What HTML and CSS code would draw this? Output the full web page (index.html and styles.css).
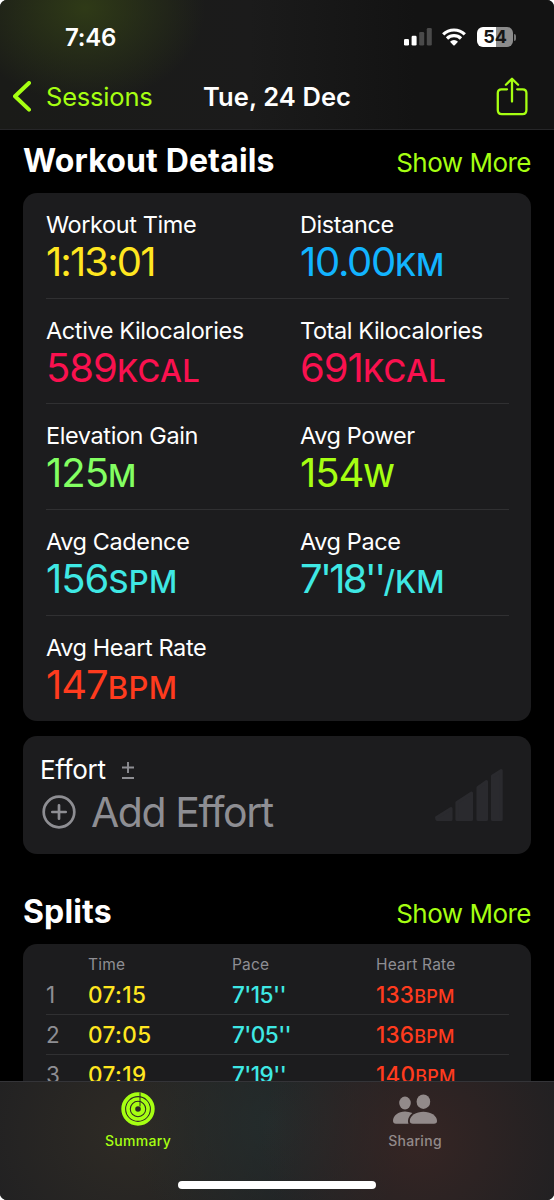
FILE: index.html
```html
<!DOCTYPE html>
<html lang="en">
<head>
<meta charset="utf-8">
<title>Workout Summary</title>
<link rel="stylesheet" href="styles.css">
</head>
<body>
<div class="screen">
  <header class="top">
    <div class="status">
      <span class="clock">7:46</span>
      <div class="indicators">
        <svg class="cell" width="28" height="18" viewBox="0 0 28 18"><rect x="0" y="11" width="5" height="6.5" rx="1.3" fill="#fff"/><rect x="7.6" y="7.8" width="5" height="9.7" rx="1.3" fill="#fff"/><rect x="15.2" y="4" width="5" height="13.5" rx="1.3" fill="#4a4a4a"/><rect x="22.8" y="0" width="5" height="17.5" rx="1.3" fill="#4a4a4a"/></svg>
        <svg class="wifi" width="24" height="18" viewBox="0 0 24 18"><g fill="none" stroke="#fff" stroke-width="3.2"><path d="M1.2 6.4a15.4 15.4 0 0 1 21.600 0"/><path d="M5 10.500a10 10 0 0 1 14 0"/></g><path d="M8 13.700a5.700 5.700 0 0 1 8 0l-3.300 3.500q-.7.7-1.400 0z" fill="#fff"/></svg>
        <div class="battery"><span>54</span></div>
        <i class="nub"></i>
      </div>
    </div>
    <nav class="nav">
      <div class="back"><svg width="18" height="31" viewBox="0 0 18 31"><path d="M16 2L2 15.3L16 28.6" fill="none" stroke="#a6ff12" stroke-width="4" stroke-linecap="round" stroke-linejoin="round"/></svg><span>Sessions</span></div>
      <h1>Tue, 24 Dec</h1>
      <svg class="share" width="32" height="40" viewBox="0 0 32 40"><g fill="none" stroke="#a6ff12" stroke-width="2.3" stroke-linecap="round" stroke-linejoin="round"><path d="M11 12.3H5.5Q1.8 12.3 1.8 16V33Q1.8 37.2 5.8 37.2H26.5Q30.4 37.2 30.4 33V16Q30.4 12.3 26.7 12.3H21.2"/><path d="M16 24.5V2M9.9 7.7L16 1.7L22.1 7.7"/></g></svg>
    </nav>
  </header>

  <main class="content">
    <div class="heading"><h2>Workout Details</h2><a class="more">Show More</a></div>
    <section class="card details">
      <div class="row"><div class="metric"><span class="label">Workout Time</span><span class="value yellow time">1:13:01</span></div><div class="metric"><span class="label">Distance</span><span class="value blue distance">10.00<small>KM</small></span></div></div>
      <div class="row"><div class="metric"><span class="label">Active Kilocalories</span><span class="value pink">589<small>KCAL</small></span></div><div class="metric"><span class="label">Total Kilocalories</span><span class="value pink">691<small>KCAL</small></span></div></div>
      <div class="row"><div class="metric"><span class="label">Elevation Gain</span><span class="value green">125<small>M</small></span></div><div class="metric"><span class="label">Avg Power</span><span class="value lime">154<small>W</small></span></div></div>
      <div class="row"><div class="metric"><span class="label">Avg Cadence</span><span class="value cyan">156<small>SPM</small></span></div><div class="metric"><span class="label">Avg Pace</span><span class="value cyan pace">7'18''<small>/KM</small></span></div></div>
      <div class="row"><div class="metric"><span class="label">Avg Heart Rate</span><span class="value red">147<small>BPM</small></span></div></div>
    </section>

    <section class="card effort">
      <div>
        <div class="effort-title"><span>Effort</span><svg width="14" height="19" viewBox="0 0 14 19"><path d="M7 1V12M1 6.5H13M1 17H13" fill="none" stroke="#8e8e93" stroke-width="1.9"/></svg></div>
        <div class="add"><svg width="34" height="34" viewBox="0 0 34 34"><circle cx="17" cy="17" r="15.3" fill="none" stroke="#8e8e93" stroke-width="2.7"/><path d="M17 10.3V23.7M10.3 17H23.7" stroke="#8e8e93" stroke-width="2.7" stroke-linecap="round"/></svg><span>Add Effort</span></div>
      </div>
      <svg class="bars" width="70" height="54" viewBox="0 0 70 54"><g fill="#2a2a2e" stroke="#2a2a2e" stroke-width="3" stroke-linejoin="round"><path d="M2.5 49.5L17 40.5V51.5H3Z"/><path d="M22.9 34.5L37.5 25V51.5H22.9Z"/><path d="M44 19.500L52.500 13.500V51.500H44Z"/><path d="M58.500 8L67.200 2.500V51.500H58.500Z"/></g></svg>
    </section>

    <div class="heading heading-splits"><h2>Splits</h2><a class="more">Show More</a></div>
    <section class="card splits">
      <div class="split head"><span></span><span>Time</span><span>Pace</span><span>Heart Rate</span></div>
      <div class="split"><span class="n">1</span><span class="yellow">07:15</span><span class="cyan">7'15''</span><span class="red">133<small>BPM</small></span></div>
      <div class="split"><span class="n">2</span><span class="yellow">07:05</span><span class="cyan">7'05''</span><span class="red">136<small>BPM</small></span></div>
      <div class="split"><span class="n">3</span><span class="yellow">07:19</span><span class="cyan">7'19''</span><span class="red">140<small>BPM</small></span></div>
    </section>
  </main>

  <footer class="tabs">
    <div class="tab active"><svg width="34" height="34" viewBox="0 0 34 34"><g fill="none" stroke="#a6ff12"><circle cx="17" cy="17" r="14.800" stroke-width="3.800"/><circle cx="17" cy="17" r="10.050" stroke-width="3.600"/><circle cx="17" cy="17" r="5" stroke-width="4.400"/></g><path d="M19 .5V14.500" stroke="#2b2a25" stroke-width="1"/></svg><span>Summary</span></div>
    <div class="tab"><svg width="46" height="34" viewBox="0 0 46 34"><g fill="#928a8a"><ellipse cx="13" cy="11" rx="5.800" ry="6.400"/><ellipse cx="31.400" cy="9.700" rx="6.800" ry="7.300"/><path d="M20.400 21.100Q16.500 19.500 13 19.500C6.500 19.500 1 23.600 1 28.800Q1 31.800 4 31.800H16.500C15.200 28.600 16.500 24.200 20.400 21.100Z"/><path d="M31.400 19.700C24.300 19.700 17.800 23.600 17.800 29Q17.800 31.800 20.800 31.800H42Q45 31.800 45 29C45 23.600 38.500 19.700 31.400 19.700Z"/></g></svg><span>Sharing</span></div>
    <i class="home"></i>
  </footer>
</div>
</body>
</html>
```
FILE: styles.css
```css
* { box-sizing: border-box; margin: 0; padding: 0; }
body { background: #fff; font-family: Inter, "Liberation Sans", sans-serif; color: #fff; }
svg { display: block; flex: none; }
span, a, h1, h2 { white-space: nowrap; }
.screen { width: 554px; height: 1200px; background: #000; border-radius: 7px; overflow: hidden; display: flex; flex-direction: column; }

.top { height: 130px; flex: none; border-bottom: 1px solid #262628; background: radial-gradient(ellipse 120px 95px at 85px 8px, #2f3a17 0%, rgba(47,58,23,0) 100%), linear-gradient(90deg, #1a1b18, #1b1b1b 45%, #131313 75%); }
.status { height: 72px; padding: 0 38px 0 65px; display: flex; justify-content: space-between; align-items: center; }
.clock { font-size: 24px; font-weight: 600; letter-spacing: -0.2px; padding-top: 3px; }
.indicators { display: flex; align-items: center; padding-top: 2px; }
.wifi { margin-left: 10px; }
.battery { width: 36px; height: 20px; margin-left: 11px; border-radius: 6px; background: linear-gradient(90deg, #fff 54%, #8c8c8c 54%); color: #151515; font-size: 18px; line-height: 20px; font-weight: 700; text-align: center; }
.nub { width: 2px; height: 7px; margin-left: 1px; background: #777; border-radius: 0 2px 2px 0; }
.nav { height: 50px; padding: 0 26px 0 13px; display: grid; grid-template-columns: 190px 1fr 32px; align-items: center; }
.back { display: flex; align-items: center; gap: 15px; color: #a6ff12; font-size: 25.500px; letter-spacing: -0.2px; }
.nav h1 { font-size: 25.500px; font-weight: 600; letter-spacing: 0.1px; }
.nav > * { position: relative; top: -0.5px; }

.content { height: 951px; flex: none; overflow: hidden; padding: 0 23px; }
.heading { height: 63px; display: flex; justify-content: space-between; align-items: baseline; padding-top: 11px; }
.heading h2 { font-size: 32px; line-height: 40px; font-weight: 700; letter-spacing: 0.15px; }
.more { color: #a6ff12; font-size: 26px; line-height: 40px; letter-spacing: -0.5px; }
.card { background: #1c1c1e; border-radius: 14px; }
.details { height: 528px; padding: 0 22px 0 23px; }
.row { height: 105.7px; border-bottom: 1px solid #303032; display: grid; grid-template-columns: 254px 1fr; padding-top: 17px; }
.row:last-child { border: 0; }
.metric { display: flex; flex-direction: column; }
.label { font-size: 23.500px; line-height: 30px; letter-spacing: -0.4px; }
.value { font-size: 40px; line-height: 44px; letter-spacing: -1px; }
.value small { font-size: 31px; font-weight: 500; letter-spacing: 0.4px; }
.value.time { letter-spacing: -1.900px; }
.value.distance { letter-spacing: -1.300px; }
.value.distance small { letter-spacing: -0.4px; }
.value.pace { letter-spacing: -2.700px; }
.value.pace small { letter-spacing: 0; }
.yellow { color: #ffe620; }
.blue { color: #12b4ff; }
.pink { color: #fa114f; }
.green { color: #83ff62; }
.lime { color: #a6ff12; }
.cyan { color: #3fe8e4; }
.red { color: #ff3b1e; }

.effort { height: 118px; margin-top: 15px; padding: 18px 27px 0 17px; display: flex; justify-content: space-between; }
.effort-title { display: flex; align-items: center; gap: 15px; font-size: 26px; line-height: 32px; letter-spacing: -0.3px; }
.add { display: flex; align-items: center; gap: 15px; color: #8e8e93; font-size: 41px; line-height: 52px; padding-left: 2px; letter-spacing: -1.450px; }
.bars { margin-top: 14px; }
.heading-splits { height: 90px; padding-top: 38px; }
.splits { height: 200px; padding: 0 22px 0 23px; }
.split { height: 40px; display: grid; grid-template-columns: 42px 144px 144px 1fr; align-items: center; border-bottom: 1px solid #303032; padding-bottom: 1px; font-size: 22.500px; font-weight: 500; }
.split.head { height: 31px; border: 0; padding: 9px 0 0; color: #8e8e93; font-size: 15.500px; font-weight: 400; letter-spacing: 0.2px; }
.split small { font-size: 18px; letter-spacing: 0.2px; }
.split .yellow { letter-spacing: 0.4px; }
.split .cyan { letter-spacing: -0.550px; }
.split .red { letter-spacing: 0.2px; }
.n { color: #8e8e93; font-weight: 400; }

.tabs { position: relative; height: 119px; flex: none; display: grid; grid-template-columns: 276px 278px; border-top: 1px solid #343438; background: radial-gradient(ellipse 160px 150px at 420px 60px, rgba(57,38,36,.85), rgba(57,38,36,0)), radial-gradient(ellipse 140px 140px at 270px 40px, rgba(36,46,46,.8), rgba(36,46,46,0)), radial-gradient(ellipse 170px 150px at 130px 50px, rgba(48,44,37,.9), rgba(48,44,37,0)), #202022; }
.tab { display: flex; flex-direction: column; align-items: center; padding-top: 10px; gap: 5px; color: #928a8a; font-size: 14px; line-height: 20px; font-weight: 500; letter-spacing: 0.3px; }
.active { color: #a6ff12; }
.home { position: absolute; left: 178px; bottom: 11px; width: 198px; height: 8px; border-radius: 4px; background: #fff; }
```
